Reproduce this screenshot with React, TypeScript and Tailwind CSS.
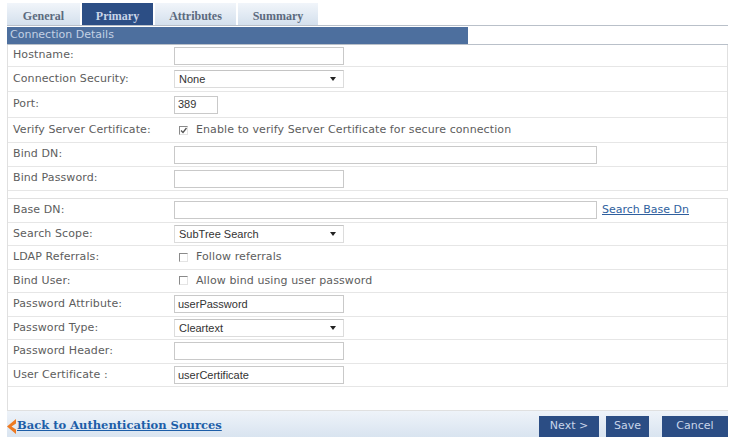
import React from "react";

const Label = ({ text }: { text: string }) => (
    <div className="w-[166px] shrink-0 pl-[5px] text-[11px] text-[#5d5d5d] tracking-[0.1px]">{text}</div>
);

const TextBox = ({ w, value }: { w: string; value?: string }) => (
    <div className={`${w} h-[18px] border border-[#c9c9c9] bg-white flex items-center px-[3px] font-['Liberation_Sans',sans-serif] text-[11px] text-[#333]`}>
        {value}
    </div>
);

const Select = ({ value }: { value: string }) => (
    <div className="w-[170px] h-[18px] border border-[#dcdcdc] border-t-[#c4c4c4] bg-white flex items-center justify-between pl-[4px] pr-[7px] font-['Liberation_Sans',sans-serif] text-[11px] text-[#333]">
        <span>{value}</span>
        <svg width="6" height="4" viewBox="0 0 6 4">
            <polygon points="0,0 6,0 3,4" fill="#222" />
        </svg>
    </div>
);

const Check = ({ checked, text }: { checked?: boolean; text: string }) => (
    <div className="flex items-center gap-[8px] pl-[5px] text-[11px] text-[#5d5d5d] tracking-[0.1px]">
        <span className="w-[9px] h-[9px] border-t border-l border-[#8a8a8a] border-r border-b border-r-[#e4e4e4] border-b-[#e4e4e4] flex items-center justify-center">
            {checked && (
                <svg width="7" height="7" viewBox="0 0 7 7">
                    <path d="M1 3.5 L3 5.5 L6.5 1" stroke="#555" strokeWidth="1.3" fill="none" />
                </svg>
            )}
        </span>
        <span>{text}</span>
    </div>
);

const Row = ({ label, h, children }: { label: string; h: string; children?: React.ReactNode }) => (
    <div className={`${h} flex items-center border-b border-[#e6e6e6]`}>
        <Label text={label} />
        <div className="flex items-center gap-[5px]">{children}</div>
    </div>
);

const tabs = [
    { name: "General", w: "w-[73px]", active: false },
    { name: "Primary", w: "w-[71px]", active: true },
    { name: "Attributes", w: "w-[81px]", active: false },
    { name: "Summary", w: "w-[80px]", active: false },
];

export default function App() {
    return (
        <div className="w-[732px] h-[437px] bg-white overflow-hidden font-['DejaVu_Sans',sans-serif]">
            <div className="ml-[7px] w-[721px]">
                {/* tabs */}
                <div className="h-[26px] pt-[4px] flex items-end gap-[2px] border-b border-[#b9c0c9]">
                    {tabs.map((t) => (
                        <div
                            key={t.name}
                            className={`${t.w} h-[22px] pt-[3px] flex items-center justify-center font-['Liberation_Serif',serif] font-bold text-[12px] ${
                                t.active
                                    ? "bg-[#2c4e85] text-[#c9d5e8]"
                                    : "bg-gradient-to-b from-[#f1f5fa] to-[#d4e0ed] text-[#5b6a7e]"
                            }`}
                        >
                            {t.name}
                        </div>
                    ))}
                </div>

                {/* header */}
                <div className="h-[19px] flex items-stretch border-b border-[#b9c0c9] pt-[1px]">
                    <div className="w-[461px] bg-[#4d6f9e] text-[#c3d1e4] text-[11px] pl-[3px] flex items-center">Connection Details</div>
                </div>

                {/* section 1 */}
                <div className="border-l border-r border-[#e0e0e0]">
                    <Row label="Hostname:" h="h-[22px]"><TextBox w="w-[170px]" /></Row>
                    <Row label="Connection Security:" h="h-[25px]"><Select value="None" /></Row>
                    <Row label="Port:" h="h-[26px]"><TextBox w="w-[44px]" value="389" /></Row>
                    <Row label="Verify Server Certificate:" h="h-[25px]"><Check checked text="Enable to verify Server Certificate for secure connection" /></Row>
                    <Row label="Bind DN:" h="h-[24px]"><TextBox w="w-[423px]" /></Row>
                    <Row label="Bind Password:" h="h-[24px]"><TextBox w="w-[170px]" /></Row>
                </div>

                <div className="h-[7px] border-l border-[#e0e0e0]" />

                {/* section 2 */}
                <div className="border border-b-0 border-[#e0e0e0]">
                    <Row label="Base DN:" h="h-[23.5px]">
                        <TextBox w="w-[423px]" />
                        <a className="text-[11px] text-[#2f5f9e] underline">Search Base Dn</a>
                    </Row>
                    <Row label="Search Scope:" h="h-[23.5px]"><Select value="SubTree Search" /></Row>
                    <Row label="LDAP Referrals:" h="h-[23.5px]"><Check text="Follow referrals" /></Row>
                    <Row label="Bind User:" h="h-[23.5px]"><Check text="Allow bind using user password" /></Row>
                    <Row label="Password Attribute:" h="h-[23.5px]"><TextBox w="w-[170px]" value="userPassword" /></Row>
                    <Row label="Password Type:" h="h-[23.5px]"><Select value="Cleartext" /></Row>
                    <Row label="Password Header:" h="h-[23.5px]"><TextBox w="w-[170px]" /></Row>
                    <Row label="User Certificate :" h="h-[23.5px]"><TextBox w="w-[170px]" value="userCertificate" /></Row>
                </div>

                <div className="h-[24px] border-l border-b border-[#e0e0e0]" />

                {/* footer */}
                <div className="h-[26px] bg-gradient-to-b from-[#eef3f9] to-[#d9e4f0] flex items-center justify-between pt-[4px]">
                    <a className="flex items-center gap-[1px] font-['DejaVu_Serif',serif] font-bold text-[11.5px] text-[#1d5ea8] underline">
                        <svg width="9" height="15" viewBox="0 0 9 15">
                            <polygon points="9,0 9,4.5 4.5,7.5 9,10.5 9,15 0,7.5" fill="#ee7a22" />
                        </svg>
                        Back to Authentication Sources
                    </a>
                    <div className="flex items-start gap-[7px] self-end h-[21px]">
                        <button className="w-[60px] h-[21px] bg-[#2b4d84] text-[#c8d5ea] text-[11px]">Next &gt;</button>
                        <button className="w-[43px] h-[21px] bg-[#2b4d84] text-[#c8d5ea] text-[11px]">Save</button>
                        <button className="w-[66px] h-[21px] bg-[#2b4d84] text-[#c8d5ea] text-[11px] ml-[6px]">Cancel</button>
                    </div>
                </div>
            </div>
        </div>
    );
}
